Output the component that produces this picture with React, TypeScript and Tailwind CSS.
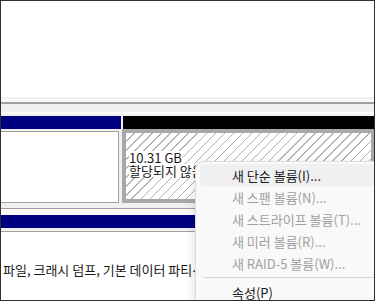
import React from 'react';

const menuItems = [
  { label: '새 단순 볼륨(I)...', enabled: true, active: true },
  { label: '새 스팬 볼륨(N)...', enabled: false },
  { label: '새 스트라이프 볼륨(T)...', enabled: false },
  { label: '새 미러 볼륨(R)...', enabled: false },
  { label: '새 RAID-5 볼륨(W)...', enabled: false },
];

const ContextMenu: React.FC = () => (
  <div className="absolute left-[195px] top-[161px] w-[200px] h-[160px] rounded-tl-[8px] border border-[#dcdcdc] bg-[#f9f9f9] pt-[2px] shadow-[0_4px_12px_rgba(0,0,0,0.14)]">
    {menuItems.map((item) => (
      <div
        key={item.label}
        className={`h-[22px] ml-[4px] pl-[32px] flex items-center rounded-l-[4px] whitespace-nowrap ${
          item.active ? 'bg-[#f0f0f0]' : ''
        } ${item.enabled ? 'text-[#1a1a1a]' : 'text-[#a0a0a0]'}`}
      >
        {item.label}
      </div>
    ))}
    <div className="h-[7px] pt-[3px] ml-[7px]">
      <div className="h-[1px] bg-[#d6d6d6]" />
    </div>
    <div className="h-[22px] ml-[4px] pl-[32px] flex items-center text-[#1a1a1a]">속성(P)</div>
  </div>
);

export default function App() {
  return (
    <div className="relative w-[375px] h-[301px] overflow-hidden bg-white text-[13px] leading-[13px] text-[#1a1a1a] font-['Noto_Sans_CJK_KR',sans-serif]">
      {/* volume list pane (empty) */}
      <div className="h-[97px] bg-white" />

      {/* splitter */}
      <div className="h-[2px] bg-[#f0f0f0]" />
      <div className="h-[3px] bg-[#fafafa]" />
      <div className="h-[2px] bg-[#a0a0a0]" />
      <div className="h-[8px] bg-[#f0f0f0]" />
      <div className="h-[2px] bg-[#fafafa]" />
      <div className="h-[2px] bg-[#f0f0f0]" />

      {/* disk row 1 */}
      <div className="flex h-[13px]">
        <div className="w-[121px] bg-[#000080]" />
        <div className="w-[2px] bg-[#f0f0f0]" />
        <div className="flex-1 bg-black" />
      </div>
      <div className="flex h-[74px] bg-[#f0f0f0]">
        <div className="w-[121px] pt-[2px]">
          <div className="h-[72px] w-[119px] bg-white border-t border-r border-b border-[#a0a0a0]" />
        </div>
        <div className="ml-[1px] flex-1 border-[4px] border-[#a8a8a8] bg-[image:repeating-linear-gradient(135deg,#fff_0px,#fff_5.4px,#b4b4b4_5.4px,#b4b4b4_6.4px)] pt-[18px] pl-[3px] whitespace-nowrap">
          <div className="h-[13px]">
            <span className="inline-block h-[13px] bg-white">10.31 GB</span>
          </div>
          <div className="h-[13px]">
            <span className="inline-block h-[13px] bg-white">할당되지 않음</span>
          </div>
        </div>
      </div>

      <div className="h-[5px] bg-[#f0f0f0]" />
      <div className="h-[1px] bg-[#a0a0a0]" />
      <div className="h-[6px] bg-[#fafafa]" />

      {/* disk row 2 */}
      <div className="h-[13px] bg-[#000080]" />
      <div className="h-[3px] bg-[#f0f0f0]" />
      <div className="h-[70px] border-t border-[#a0a0a0] bg-white pl-[3px] pt-[31px] whitespace-nowrap">
        파일, 크래시 덤프, 기본 데이터 파티션)
      </div>

      <ContextMenu />

      {/* window frame */}
      <div className="pointer-events-none absolute inset-0 border border-[#2e2e2e]" />
    </div>
  );
}
